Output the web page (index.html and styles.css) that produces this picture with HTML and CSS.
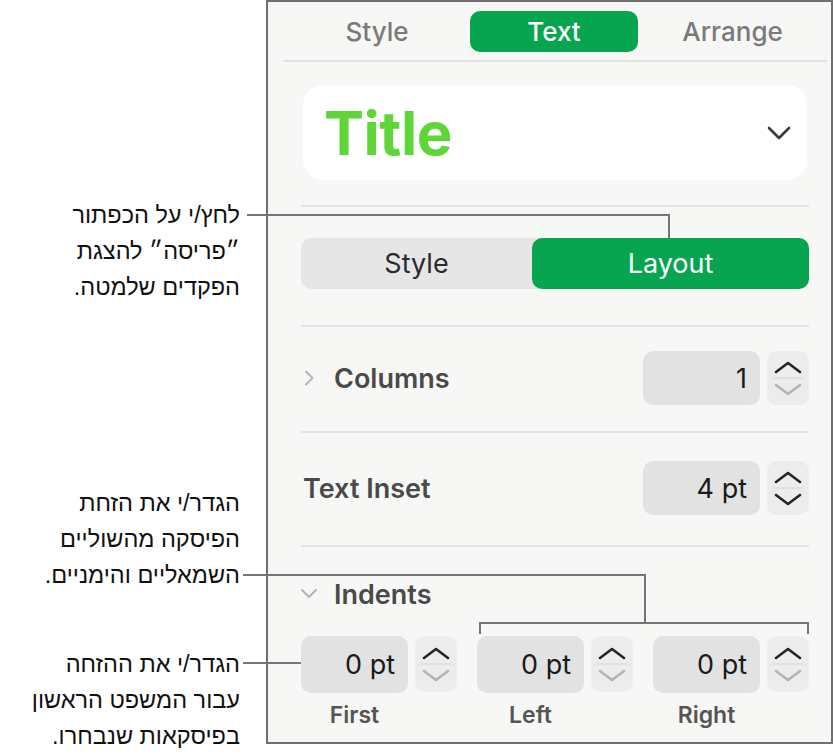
FILE: index.html
```html
<!DOCTYPE html>
<html lang="en">
<head>
<meta charset="utf-8">
<title>Text Layout</title>
<link rel="stylesheet" href="styles.css">
</head>
<body>
<div class="page">
  <div class="notes">
    <p class="note note-1" dir="rtl">לחץ/י על הכפתור<br>״פריסה״ להצגת<br>הפקדים שלמטה.</p>
    <p class="note note-2" dir="rtl">הגדר/י את הזחת<br>הפיסקה מהשוליים<br>השמאליים והימניים.</p>
    <p class="note note-3" dir="rtl">הגדר/י את ההזחה<br>עבור המשפט הראשון<br>בפיסקאות שנבחרו.</p>
  </div>

  <div class="panel">
    <div class="tabs">
      <div class="tab">Style</div>
      <div class="tab tab-active">Text</div>
      <div class="tab">Arrange</div>
    </div>

    <div class="content">
      <div class="style-box">
        <span class="style-name">Title</span>
        <svg class="style-chevron" width="24" height="14" viewBox="0 0 24 14"><polyline points="2,2 12,12 22,2" fill="none" stroke="#3a3a3a" stroke-width="2.6" stroke-linecap="round" stroke-linejoin="round"/></svg>
      </div>

      <div class="sep sep-a"></div>

      <div class="segment">
        <div class="seg">Style</div>
        <div class="seg seg-active">Layout</div>
      </div>

      <div class="sep sep-b"></div>

      <div class="row row-columns">
        <div class="row-label">
          <svg class="disclosure-right" width="10" height="16" viewBox="0 0 10 16"><polyline points="2,1.5 8.5,8 2,14.5" fill="none" stroke="#b3b3b3" stroke-width="2" stroke-linecap="round" stroke-linejoin="round"/></svg>
          <span class="label">Columns</span>
        </div>
        <div class="field">
          <div class="value value-wide">1</div>
          <svg class="stepper" width="42" height="54" viewBox="0 0 42 54"><polyline points="9,21 21,12 33,21" fill="none" stroke="#262626" stroke-width="2.6" stroke-linecap="round" stroke-linejoin="round"/><line x1="6" y1="27" x2="36" y2="27" stroke="#dcdcdc" stroke-width="1.5"/><polyline points="9,34 21,43 33,34" fill="none" stroke="#b4b4b4" stroke-width="2.6" stroke-linecap="round" stroke-linejoin="round"/></svg>
        </div>
      </div>

      <div class="sep sep-c"></div>

      <div class="row row-inset">
        <div class="row-label">
          <span class="label label-plain">Text Inset</span>
        </div>
        <div class="field">
          <div class="value value-wide">4 pt</div>
          <svg class="stepper" width="42" height="54" viewBox="0 0 42 54"><polyline points="9,21 21,12 33,21" fill="none" stroke="#262626" stroke-width="2.6" stroke-linecap="round" stroke-linejoin="round"/><line x1="6" y1="27" x2="36" y2="27" stroke="#dcdcdc" stroke-width="1.5"/><polyline points="9,34 21,43 33,34" fill="none" stroke="#262626" stroke-width="2.6" stroke-linecap="round" stroke-linejoin="round"/></svg>
        </div>
      </div>

      <div class="sep sep-d"></div>

      <div class="indents-head">
        <svg class="disclosure-down" width="18" height="12" viewBox="0 0 18 12"><polyline points="2,2 9,9 16,2" fill="none" stroke="#b3b3b3" stroke-width="2" stroke-linecap="round" stroke-linejoin="round"/></svg>
        <span class="label">Indents</span>
      </div>

      <div class="indents">
        <div class="indent">
          <div class="field">
            <div class="value value-small">0 pt</div>
            <svg class="stepper stepper-tall" width="42" height="56" viewBox="0 0 42 56"><polyline points="9,22 21,13 33,22" fill="none" stroke="#262626" stroke-width="2.6" stroke-linecap="round" stroke-linejoin="round"/><line x1="6" y1="28" x2="36" y2="28" stroke="#dcdcdc" stroke-width="1.5"/><polyline points="9,35 21,44 33,35" fill="none" stroke="#b4b4b4" stroke-width="2.6" stroke-linecap="round" stroke-linejoin="round"/></svg>
          </div>
          <div class="caption">First</div>
        </div>
        <div class="indent">
          <div class="field">
            <div class="value value-small">0 pt</div>
            <svg class="stepper stepper-tall" width="42" height="56" viewBox="0 0 42 56"><polyline points="9,22 21,13 33,22" fill="none" stroke="#262626" stroke-width="2.6" stroke-linecap="round" stroke-linejoin="round"/><line x1="6" y1="28" x2="36" y2="28" stroke="#dcdcdc" stroke-width="1.5"/><polyline points="9,35 21,44 33,35" fill="none" stroke="#b4b4b4" stroke-width="2.6" stroke-linecap="round" stroke-linejoin="round"/></svg>
          </div>
          <div class="caption">Left</div>
        </div>
        <div class="indent">
          <div class="field">
            <div class="value value-small">0 pt</div>
            <svg class="stepper stepper-tall" width="42" height="56" viewBox="0 0 42 56"><polyline points="9,22 21,13 33,22" fill="none" stroke="#262626" stroke-width="2.6" stroke-linecap="round" stroke-linejoin="round"/><line x1="6" y1="28" x2="36" y2="28" stroke="#dcdcdc" stroke-width="1.5"/><polyline points="9,35 21,44 33,35" fill="none" stroke="#b4b4b4" stroke-width="2.6" stroke-linecap="round" stroke-linejoin="round"/></svg>
          </div>
          <div class="caption">Right</div>
        </div>
      </div>
    </div>
  </div>

  <div class="leader leader-1h"></div>
  <div class="leader leader-1v"></div>
  <div class="leader leader-2h"></div>
  <div class="leader leader-2v"></div>
  <div class="leader-bracket"></div>
  <div class="leader leader-3h"></div>
</div>
</body>
</html>
```

FILE: styles.css
```css
* { box-sizing: border-box; }

html, body {
  margin: 0;
  padding: 0;
  background: #ffffff;
}

.page {
  position: relative;
  display: flex;
  width: 833px;
  height: 756px;
  font-family: Inter, "Liberation Sans", sans-serif;
}

/* callout notes */
.notes {
  width: 266px;
  flex: none;
  display: flex;
  flex-direction: column;
}

.note {
  margin: 0;
  width: 240px;
  text-align: right;
  font-family: "Liberation Sans", "DejaVu Sans", sans-serif;
  font-size: 23.5px;
  line-height: 36px;
  color: #111111;
}

.note-1 { margin-top: 197px; }
.note-2 { margin-top: 180px; }
.note-3 { margin-top: 53px; }

/* panel */
.panel {
  width: 567px;
  height: 744px;
  flex: none;
  border: 2px solid #6f6f6f;
  background: #f7f7f6;
}

.tabs {
  display: grid;
  grid-template-columns: 186px 168px 1fr;
  align-items: center;
  height: 60px;
  margin: 0 4px 0 16px;
  border-bottom: 2px solid #e1e1e1;
}

.tab {
  text-align: center;
  font-size: 26px;
  font-weight: 500;
  color: #7a7a7a;
  line-height: 41px;
}

.tab-active {
  height: 41px;
  border-radius: 10px;
  background: #07a54f;
  color: #ffffff;
}

.content {
  padding: 0 22px 0 33px;
}

.style-box {
  display: flex;
  align-items: center;
  justify-content: space-between;
  height: 95px;
  margin: 23px 2px 0 2px;
  padding: 0 16px 0 21px;
  border-radius: 20px;
  background: #ffffff;
}

.style-name {
  font-size: 60px;
  font-weight: 700;
  color: #5ed638;
  letter-spacing: -0.5px;
}

.sep {
  height: 2px;
  background: #e3e3e3;
}

.sep-a { margin-top: 25px; }
.sep-b { margin-top: 36px; }
.sep-c { margin-top: 26px; }
.sep-d { margin-top: 30px; }

.segment {
  display: grid;
  grid-template-columns: 231px 1fr;
  height: 51px;
  margin-top: 31px;
  border-radius: 10px;
  background: #e6e6e6;
}

.seg {
  display: flex;
  align-items: center;
  justify-content: center;
  font-size: 27px;
  color: #2b2b2b;
}

.seg-active {
  border-radius: 10px;
  background: #07a54f;
  color: #ffffff;
}

.row {
  display: flex;
  align-items: center;
  justify-content: space-between;
  height: 54px;
}

.row-columns { margin-top: 24px; }
.row-inset { margin-top: 28px; }

.row-label {
  display: flex;
  align-items: center;
}

.disclosure-right {
  margin-left: 3px;
  margin-right: 20px;
}

.label {
  font-size: 27px;
  font-weight: 600;
  color: #4a4a4a;
}

.label-plain { margin-left: 2px; }

.field {
  display: flex;
  align-items: stretch;
  gap: 7px;
}

.value {
  display: flex;
  align-items: center;
  justify-content: flex-end;
  padding-right: 13px;
  border-radius: 10px;
  background: #e2e2e2;
  font-size: 27px;
  color: #1a1a1a;
}

.value-wide {
  width: 117px;
  height: 54px;
}

.stepper {
  display: block;
  border-radius: 10px;
  background: #ececec;
}

.indents-head {
  display: flex;
  align-items: center;
  height: 30px;
  margin-top: 32px;
}

.disclosure-down {
  margin-left: -1px;
  margin-right: 16px;
}

.indents {
  display: flex;
  gap: 20px;
  margin-top: 27px;
}

.indent {
  display: flex;
  flex-direction: column;
}

.value-small {
  width: 107px;
  height: 57px;
}

.stepper-tall {
  height: 56px;
}

.caption {
  width: 107px;
  margin-top: 9px;
  text-align: center;
  font-size: 23px;
  font-weight: 600;
  line-height: 26px;
  color: #555555;
}

/* leader lines overlaying the panel */
.leader {
  position: absolute;
  background: #767676;
}

.leader-1h { left: 247px; top: 214px; width: 423px; height: 2px; }
.leader-1v { left: 668px; top: 214px; width: 2px; height: 24px; }
.leader-2h { left: 243px; top: 574px; width: 403px; height: 2px; }
.leader-2v { left: 644px; top: 574px; width: 2px; height: 49px; }
.leader-3h { left: 243px; top: 662px; width: 58px; height: 2px; }

.leader-bracket {
  position: absolute;
  left: 479px;
  top: 622px;
  width: 330px;
  height: 12px;
  border: 2px solid #767676;
  border-bottom: none;
}
```
